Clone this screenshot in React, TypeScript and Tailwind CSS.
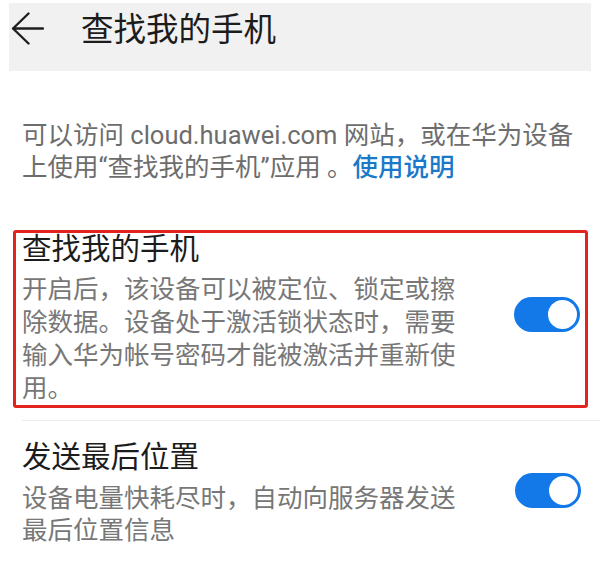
const font = { fontFamily: 'Roboto, "Noto Sans CJK SC", sans-serif' };

function Toggle({ className = "" }: { className?: string }) {
	return (
		<div
			className={`flex h-[35px] w-[66px] shrink-0 items-center justify-end rounded-full bg-[#1479e8] px-[3px] ${className}`}
		>
			<div className="h-[29px] w-[29px] rounded-full bg-white" />
		</div>
	);
}

function BackArrow() {
	return (
		<svg width="34" height="34" viewBox="0 0 34 34" fill="none" className="ml-[1px] shrink-0">
			<path
				d="M33 16.5H3M18.5 1.5L3 16.5L18.5 31.5"
				stroke="#1e1e1e"
				strokeWidth="2.4"
				strokeLinecap="round"
				strokeLinejoin="round"
			/>
		</svg>
	);
}

export default function App() {
	return (
		<div className="h-[561px] w-[600px] overflow-hidden bg-white pt-[3px] text-[#1c1c1c]" style={font}>
			{/* Header */}
			<div className="mx-[9px] flex h-[68px] items-start bg-[#f1f1f1] pt-[9px]">
				<BackArrow />
				<h1 className="ml-[37px] text-[32.5px] leading-[36px] font-normal">查找我的手机</h1>
			</div>

			{/* Intro */}
			<p className="px-[22px] pt-[48px] text-[25.5px] leading-[32px] text-[#6d6d6d]">
				可以访问 cloud.huawei.com 网站，或在华为设备
				<br />
				上使用“查找我的手机”应用 。<span className="font-medium text-[#1b79c9]">使用说明</span>
			</p>

			{/* Find my phone */}
			<div className="mt-[47px] mr-[12px] ml-[13px] flex items-start rounded-[3px] border-[3px] border-[#e2231f] pr-[5px] pl-[6px]">
				<div className="w-[445px]">
					<div className="text-[29.5px] leading-[32px]">查找我的手机</div>
					<p className="mt-[8px] text-[25.5px] leading-[33px] text-[#777777]">
						开启后，该设备可以被定位、锁定或擦除数据。设备处于激活锁状态时，需要输入华为帐号密码才能被激活并重新使用。
					</p>
				</div>
				<div className="flex flex-1 justify-end">
					<Toggle className="mt-[64px]" />
				</div>
			</div>

			<div className="mt-[12px] ml-[22px] h-px bg-[#ebebeb]" />

			{/* Send last location */}
			<div className="flex items-start pt-[20px] pr-[19px] pl-[22px]">
				<div className="w-[445px]">
					<div className="text-[29.5px] leading-[32px]">发送最后位置</div>
					<p className="mt-[9px] text-[25.5px] leading-[32px] text-[#777777]">
						设备电量快耗尽时，自动向服务器发送最后位置信息
					</p>
				</div>
				<div className="flex flex-1 justify-end">
					<Toggle className="mt-[32px]" />
				</div>
			</div>
		</div>
	);
}
